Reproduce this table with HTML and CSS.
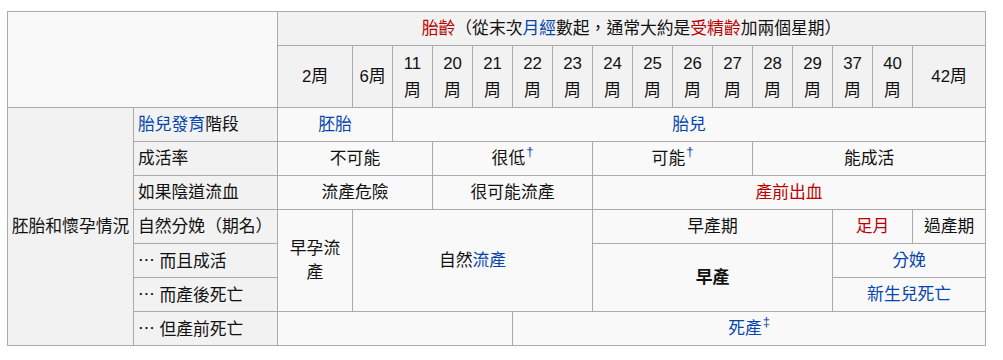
FILE: index.html
```html
<!DOCTYPE html>
<html lang="zh-Hant">
<head>
<meta charset="utf-8">
<title>胎齡</title>
<link rel="stylesheet" href="styles.css">
</head>
<body>
<table class="wikitable">
  <colgroup>
    <col class="c-cond"><col class="c-label"><col class="c-w2">
    <col class="c-wk"><col class="c-wk"><col class="c-wk"><col class="c-wk"><col class="c-wk"><col class="c-wk"><col class="c-wk">
    <col class="c-wk"><col class="c-wk"><col class="c-wk"><col class="c-wk"><col class="c-wk"><col class="c-wk"><col class="c-wk">
    <col class="c-w42">
  </colgroup>
  <tr class="head1">
    <td class="blank" colspan="2" rowspan="2"></td>
    <th colspan="16"><span class="red">胎齡</span>（從末次<span class="link">月經</span>數起，通常大約是<span class="red">受精齡</span>加兩個星期）</th>
  </tr>
  <tr class="weeks">
    <th>2周</th><th>6周</th><th>11周</th><th>20周</th><th>21周</th><th>22周</th><th>23周</th><th>24周</th><th>25周</th><th>26周</th><th>27周</th><th>28周</th><th>29周</th><th>37周</th><th>40周</th><th>42周</th>
  </tr>
  <tr>
    <th rowspan="7" class="cond">胚胎和懷孕情況</th>
    <th class="label"><span class="link">胎兒發育</span>階段</th>
    <td colspan="2"><span class="link">胚胎</span></td>
    <td colspan="14"><span class="link">胎兒</span></td>
  </tr>
  <tr>
    <th class="label">成活率</th>
    <td colspan="3">不可能</td>
    <td colspan="4">很低<sup class="note">†</sup></td>
    <td colspan="4">可能<sup class="note">†</sup></td>
    <td colspan="5">能成活</td>
  </tr>
  <tr>
    <th class="label">如果陰道流血</th>
    <td colspan="3">流產危險</td>
    <td colspan="4">很可能流產</td>
    <td colspan="9"><span class="red">產前出血</span></td>
  </tr>
  <tr>
    <th class="label">自然分娩（期名）</th>
    <td rowspan="3">早孕流產</td>
    <td colspan="6" rowspan="3">自然<span class="link">流產</span></td>
    <td colspan="6">早產期</td>
    <td colspan="2"><span class="red">足月</span></td>
    <td>過產期</td>
  </tr>
  <tr>
    <th class="label"><span class="ell">…</span> 而且成活</th>
    <td colspan="6" rowspan="2" class="strong">早產</td>
    <td colspan="3"><span class="link">分娩</span></td>
  </tr>
  <tr>
    <th class="label"><span class="ell">…</span> 而產後死亡</th>
    <td colspan="3"><span class="link">新生兒死亡</span></td>
  </tr>
  <tr>
    <th class="label"><span class="ell">…</span> 但產前死亡</th>
    <td colspan="5"></td>
    <td colspan="11"><span class="link">死產</span><sup class="note">‡</sup></td>
  </tr>
</table>
</body>
</html>
```

FILE: styles.css
```css
html, body {
  margin: 0;
  background: #ffffff;
}

body {
  font-family: "Liberation Sans", "Noto Sans CJK TC", sans-serif;
  font-size: 16.8px;
  color: #111111;
}

.wikitable {
  margin: 11px 0 0 7px;
  border-collapse: collapse;
  table-layout: fixed;
  width: 979px;
  background: #f9f9f9;
  border: 1px solid #aaaaaa;
}

.c-cond { width: 126px; }
.c-label { width: 144px; }
.c-w2 { width: 75px; }
.c-wk { width: 40px; }
.c-w42 { width: 73px; }

.wikitable tr {
  height: 34px;
}

.wikitable tr.weeks {
  height: 62px;
}

.wikitable th,
.wikitable td {
  border: 1px solid #aaaaaa;
  padding: 3px 4px;
  line-height: 24px;
  text-align: center;
  vertical-align: middle;
  font-weight: normal;
}

.wikitable th {
  background: #f2f2f2;
}

.wikitable .blank {
  background: #f9f9f9;
}

.wikitable th.label {
  text-align: left;
}

.wikitable th.cond {
  white-space: nowrap;
  padding: 3px 2px;
}

.wikitable .weeks th {
  line-height: 27px;
  padding: 0 4px;
}

.link {
  color: #0645ad;
}

.red {
  color: #ba0000;
}

.wikitable .strong {
  font-weight: bold;
}

.note {
  color: #0645ad;
  font-size: 13px;
  line-height: 0;
  vertical-align: 0.6em;
  margin-left: 1px;
}

.ell {
  font-family: "Noto Sans CJK TC", sans-serif;
}
```
